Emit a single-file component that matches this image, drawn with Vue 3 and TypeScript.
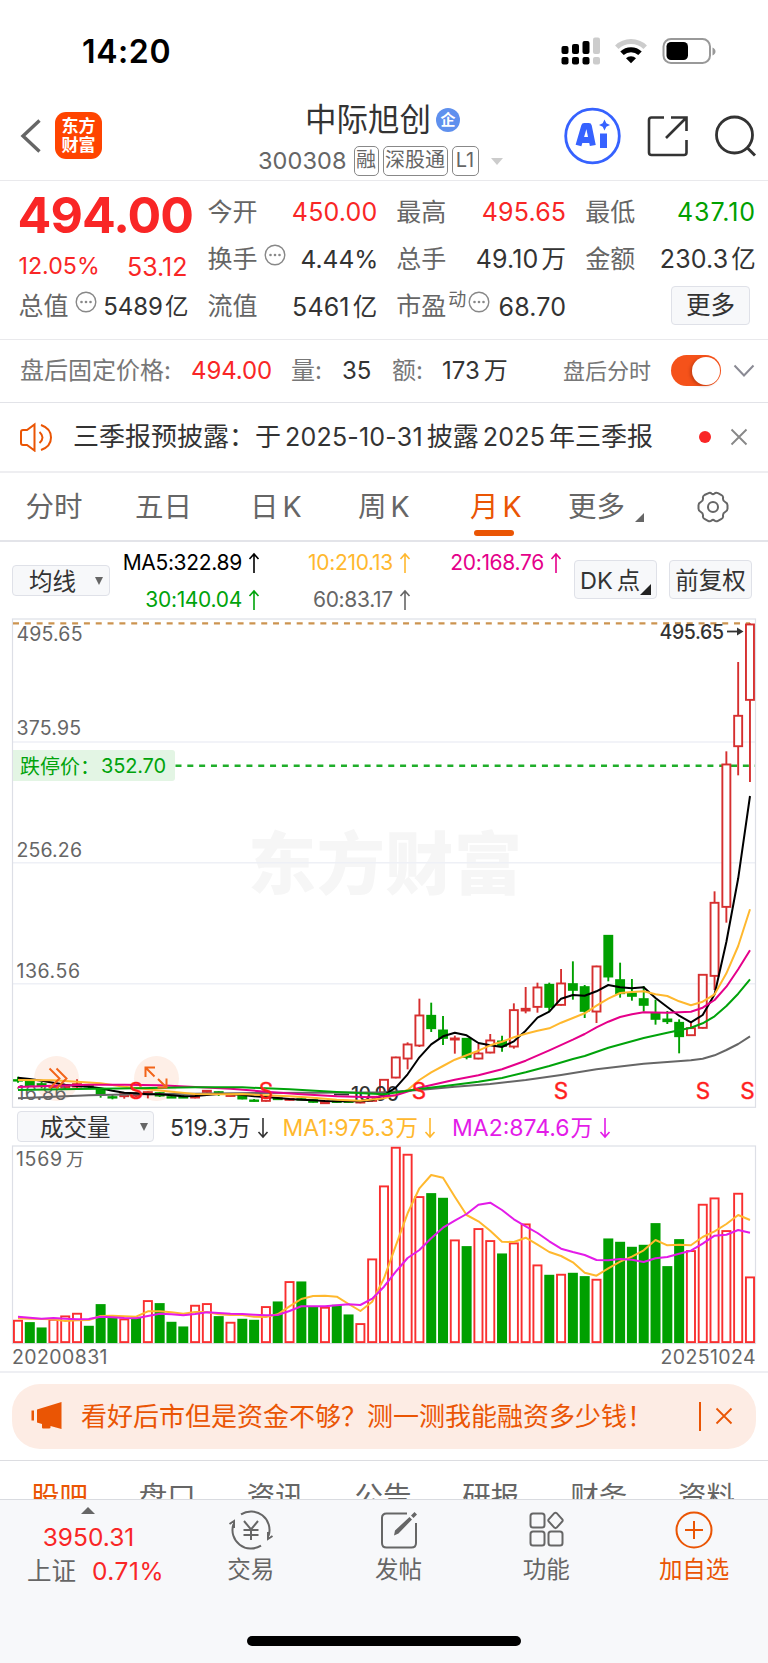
<script setup lang="ts">
type Candle = [up: 0 | 1, high: number, top: number, bottom: number, low: number]

const LEFT = 18
const STEP = 11.806
const cx = (i: number): number => LEFT + STEP * i

/* Candle and average values are stored in thirds of a pixel below the chart origin. */
const ORIGIN = 860
const py = (v: number): number => ORIGIN + v / 3

const candles: Candle[] = [
  [0, 650, 658, 662, 668], [0, 662, 662, 678, 678], [0, 666, 670, 678, 685], [1, 674, 677, 682, 684],
  [1, 672, 675, 685, 687], [1, 658, 670, 682, 690], [0, 672, 675, 680, 684], [0, 684, 684, 706, 713],
  [0, 704, 709, 713, 718], [1, 700, 700, 711, 716], [1, 698, 698, 710, 712], [1, 694, 694, 704, 715],
  [0, 697, 697, 709, 711], [0, 704, 709, 713, 713], [0, 706, 709, 713, 713], [1, 707, 707, 715, 715],
  [1, 690, 690, 698, 698], [0, 694, 694, 704, 708], [1, 704, 704, 710, 710], [0, 706, 706, 718, 718],
  [0, 717, 719, 723, 725], [1, 710, 710, 725, 725], [0, 713, 713, 720, 720], [1, 715, 715, 722, 722],
  [0, 715, 715, 720, 720], [0, 718, 718, 728, 728], [1, 722, 722, 732, 732], [0, 722, 722, 728, 728],
  [0, 722, 722, 728, 728], [1, 723, 723, 730, 730], [1, 708, 708, 725, 725], [1, 657, 657, 700, 700],
  [1, 590, 590, 655, 655], [1, 547, 551, 598, 628], [1, 416, 464, 559, 561], [0, 428, 465, 507, 516],
  [0, 468, 509, 536, 555], [1, 527, 533, 541, 581], [0, 534, 534, 593, 598], [1, 552, 578, 598, 598],
  [1, 522, 539, 580, 580], [0, 527, 542, 560, 575], [1, 430, 448, 562, 566], [1, 381, 444, 454, 460],
  [1, 368, 380, 443, 458], [0, 368, 372, 443, 455], [1, 327, 368, 437, 437], [0, 304, 370, 392, 419],
  [0, 375, 379, 455, 474], [1, 317, 317, 457, 489], [0, 225, 225, 352, 364], [0, 308, 358, 402, 413],
  [0, 357, 398, 410, 422], [0, 378, 415, 437, 455], [0, 419, 459, 479, 494], [0, 453, 476, 486, 492],
  [0, 478, 486, 531, 580], [1, 483, 502, 528, 528], [1, 342, 342, 506, 506], [1, 94, 126, 350, 390],
  [1, -326, -289, 143, 188], [1, -594, -435, -339, -254], [1, -710, -709, -478, -234],
]

const averages: { color: string; points: [number, number][] }[] = [
  { color: '#666666', points: [[0, 715], [6, 706], [10, 703], [15, 701], [20, 699], [25, 698], [31, 697], [34, 690], [37, 680], [40, 672], [43, 660], [46, 645], [49, 628], [53, 611], [57, 601], [58, 596], [59, 586], [60, 570], [61, 552], [62, 529]] },
  { color: '#000000', points: [[0, 653], [1, 657], [2, 662], [3, 668], [4, 674], [5, 678], [6, 680], [7, 685], [8, 692], [9, 698], [10, 700], [11, 703], [12, 703], [13, 706], [14, 709], [15, 708], [16, 705], [17, 702], [18, 702], [19, 705], [20, 709], [21, 711], [22, 714], [23, 717], [24, 719], [25, 721], [26, 723], [27, 724], [28, 724], [29, 724], [30, 721], [31, 705], [32, 683], [33, 643], [34, 592], [35, 553], [36, 529], [37, 518], [38, 526], [39, 549], [40, 556], [41, 561], [42, 544], [43, 512], [44, 473], [45, 455], [46, 416], [47, 405], [48, 407], [49, 394], [50, 375], [51, 382], [52, 385], [53, 382], [54, 414], [55, 441], [56, 467], [57, 487], [58, 465], [59, 403], [60, 245], [61, 55], [62, -192]] },
  { color: '#ffb82e', points: [[0, 660], [3, 661], [5, 665], [7, 670], [9, 680], [11, 688], [13, 695], [15, 702], [17, 703], [19, 702], [21, 706], [23, 709], [25, 713], [27, 719], [29, 722], [31, 715], [32, 705], [33, 690], [34, 660], [35, 637], [36, 618], [37, 599], [38, 586], [39, 572], [40, 556], [41, 545], [42, 532], [43, 521], [44, 512], [45, 505], [46, 488], [47, 474], [48, 460], [49, 437], [50, 416], [51, 399], [52, 396], [53, 394], [54, 403], [55, 408], [56, 424], [57, 436], [58, 425], [59, 403], [60, 340], [61, 258], [62, 148]] },
  { color: '#e5008a', points: [[0, 681], [3, 677], [6, 674], [9, 674], [12, 676], [15, 681], [18, 686], [21, 695], [24, 703], [27, 709], [30, 712], [32, 706], [34, 683], [37, 659], [39, 646], [41, 628], [43, 602], [45, 571], [47, 539], [48, 522], [49, 502], [50, 485], [51, 471], [52, 463], [53, 457], [55, 458], [57, 455], [58, 443], [59, 420], [60, 380], [61, 328], [62, 271]] },
  { color: '#00a30b', points: [[0, 690], [5, 687], [10, 685], [15, 682], [19, 682], [23, 688], [27, 696], [31, 703], [34, 687], [37, 674], [39, 665], [41, 654], [43, 637], [45, 618], [47, 597], [48, 588], [50, 563], [53, 534], [55, 518], [57, 503], [58, 490], [59, 469], [60, 438], [61, 401], [62, 358]] },
]
const line = (pts: [number, number][]): string => pts.map(([i, v]) => `${cx(i).toFixed(1)},${py(v).toFixed(1)}`).join(' ')

const upMonths = new Set([0, 3, 4, 5, 9, 11, 15, 16, 18, 21, 23, 26, 29, 30, 31, 32, 33, 34, 37, 39, 40, 42, 43, 44, 46, 49, 57, 58, 59, 60, 61, 62])
const volumes = [661, 668, 684, 658, 648, 640, 679, 614, 652, 657, 655, 602, 611, 667, 681, 616, 611, 650, 667, 658, 661, 620, 606, 545, 546, 621, 622, 616, 645, 671, 477, 258, 142, 163, 290, 281, 295, 420, 440, 386, 422, 462, 429, 372, 495, 526, 523, 520, 530, 538, 417, 427, 442, 436, 371, 500, 419, 452, 313, 294, 392, 280, 531]
const volMa1 = [655, 656, 657, 658, 663, 661, 660, 648, 647, 649, 650, 634, 634, 637, 641, 636, 636, 643, 645, 645, 650, 651, 643, 619, 597, 588, 587, 590, 612, 633, 605, 535, 437, 340, 265, 225, 233, 290, 345, 364, 392, 425, 426, 413, 434, 456, 468, 487, 518, 527, 505, 485, 470, 451, 420, 436, 434, 436, 411, 394, 372, 345, 360]
const volMa2 = [650, 653, 656, 654, 656, 658, 657, 650, 652, 654, 655, 648, 641, 643, 646, 642, 637, 639, 641, 642, 644, 646, 645, 633, 619, 619, 619, 616, 613, 615, 596, 560, 515, 474, 450, 415, 383, 362, 342, 314, 308, 330, 358, 379, 399, 424, 446, 456, 465, 480, 481, 477, 479, 486, 475, 471, 461, 452, 431, 407, 404, 390, 398]
const vy = (v: number): number => 1100 + v / 3
const volLine = (vals: number[]): string => vals.map((v, i) => `${cx(i).toFixed(1)},${vy(v).toFixed(1)}`).join(' ')

const axis = [
  { label: '495.65', y: 641, w: 66 },
  { label: '375.95', y: 735, w: 64.5 },
  { label: '256.26', y: 857, w: 65.5 },
  { label: '136.56', y: 978, w: 63.5 },
  { label: '16.86', y: 1100, w: 50 },
]
const signals = [136, 266, 419, 561, 703, 747.5]

const mas = [
  { text: 'MA5:322.89', cls: 'c5' }, { text: '10:210.13', cls: 'c10' }, { text: '20:168.76', cls: 'c20' },
  { text: '30:140.04', cls: 'c30' }, { text: '60:83.17', cls: 'c60' },
]
const volStats = [
  { text: '519.3', cls: 'v0' }, { text: 'MA1:975.3', cls: 'v1' }, { text: 'MA2:874.6', cls: 'v2' },
]

const periods = [
  { name: '分时', cls: 'p0' }, { name: '五日', cls: 'p1' }, { name: '日', k: true, cls: 'p2' },
  { name: '周', k: true, cls: 'p3' }, { name: '月', k: true, cls: 'p4', on: true }, { name: '更多', cls: 'p5', more: true },
]
const sections = ['股吧', '盘口', '资讯', '公告', '研报', '财务', '资料']
</script>

<template>
  <div class="app">
    <div class="status">
      <span class="clock">14:20</span>
      <svg class="status-icons" width="160" height="30" viewBox="560 36 160 30">
        <g fill="#000">
          <rect x="561.5" y="46" width="7" height="8" rx="2" /><rect x="572" y="44" width="7" height="10" rx="2" />
          <rect x="582.5" y="41" width="7" height="13" rx="2" /><rect x="561.5" y="57" width="7" height="7.5" rx="2" />
          <rect x="572" y="57" width="7" height="7.5" rx="2" /><rect x="582.5" y="57" width="7" height="7.5" rx="2" />
        </g>
        <rect x="593" y="37.5" width="7" height="16.5" rx="2" fill="#ccc" /><rect x="593" y="57" width="7" height="7.5" rx="2" fill="#ccc" />
        <g fill="none" stroke-width="5">
          <path d="M616.8 47.3a20.3 20.3 0 0 1 28.4 0" stroke="#ccc" />
          <path d="M622 53.3a13 13 0 0 1 18 0" stroke="#000" />
        </g>
        <path d="M626 58.3a7 7 0 0 1 10 0l-5 5z" fill="#000" />
        <rect x="663.5" y="39" width="46.5" height="24" rx="7.5" fill="none" stroke="#999" stroke-width="2" />
        <rect x="666.5" y="42" width="21.5" height="18" rx="4.5" fill="#000" />
        <path d="M712.5 47.5c4 1.500 4 6.500 0 8z" fill="#999" />
      </svg>
    </div>

    <header class="header">
      <svg class="back" width="24" height="36" viewBox="0 0 24 36"><path d="M20.500 2.500L4 18l16.500 15.500" fill="none" stroke="#666" stroke-width="3.400" /></svg>
      <div class="logo"><span>东方</span><span>财富</span></div>
      <div class="title-box">
        <div class="title">中际旭创<i>企</i></div>
        <div class="code"><b>300308</b><em>融</em><em>深股通</em><em>L1</em><u></u></div>
      </div>
      <svg class="head-icons" width="196" height="60" viewBox="562 106 196 60" fill="none">
        <circle cx="592.500" cy="136" r="26.800" stroke="#3662ff" stroke-width="2.800" />
        <path d="M578.500 145.500l5.700-19.500h4.600l4 19.500M580.500 140h11" stroke="#3662ff" stroke-width="6" stroke-linejoin="round" />
        <path d="M603.500 133.500v14.500" stroke="#3662ff" stroke-width="7" />
        <path d="M604.500 119.500l1.800 3.700 3.700 1.800-3.700 1.800-1.800 3.700-1.800-3.700-3.700-1.800 3.700-1.800z" fill="#3662ff" />
        <path d="M664 117.500h-12.500q-2.500 0-2.500 2.500v32.500q0 2.500 2.500 2.500h32.500q2.500 0 2.500-2.500V140M671 117.500h15.500V131M686 118l-20 20" stroke="#333" stroke-width="2.600" />
        <circle cx="734.500" cy="135" r="18" stroke="#333" stroke-width="2.800" /><path d="M747 147.500l8 8" stroke="#333" stroke-width="3" />
      </svg>
    </header>

    <section class="quote">
      <div class="qcol main">
        <div class="price">494.00</div>
        <div class="chg"><span>12.05%</span><span class="diff">53.12</span></div>
        <div class="q"><label>总值</label><svg class="dots" viewBox="0 0 22 22"><use href="#dots" /></svg><b>5489<s>亿</s></b></div>
      </div>
      <div class="qcol">
        <div class="q"><label>今开</label><b class="red">450.00</b></div>
        <div class="q"><label>换手</label><svg class="dots" viewBox="0 0 22 22"><g id="dots"><circle cx="11" cy="11" r="9.800" fill="none" stroke="#888" stroke-width="1.400" /><circle cx="6.500" cy="11" r="1.300" fill="#888" /><circle cx="11" cy="11" r="1.300" fill="#888" /><circle cx="15.500" cy="11" r="1.300" fill="#888" /></g></svg><b class="pct">4.44%</b></div>
        <div class="q"><label>流值</label><b>5461<s>亿</s></b></div>
      </div>
      <div class="qcol">
        <div class="q"><label>最高</label><b class="red">495.65</b></div>
        <div class="q"><label>总手</label><b>49.10<s>万</s></b></div>
        <div class="q pe"><label>市盈</label><sup>动</sup><svg class="dots" viewBox="0 0 22 22"><use href="#dots" /></svg><b>68.70</b></div>
      </div>
      <div class="qcol">
        <div class="q"><label>最低</label><b class="green">437.10</b></div>
        <div class="q"><label>金额</label><b>230.3<s>亿</s></b></div>
        <div class="q"><button class="more">更多</button></div>
      </div>
    </section>

    <section class="after">
      <span class="g a0">盘后固定价格:</span><span class="red a1">494.00</span>
      <span class="g a2">量:</span><span class="a3">35</span>
      <span class="g a4">额:</span><span class="a5">173<s>万</s></span>
      <span class="g a6">盘后分时</span>
      <span class="switch"><i></i></span>
      <svg class="down" width="22" height="14" viewBox="0 0 22 14"><path d="M1.500 1.500L11 11.500l9.500-10" fill="none" stroke="#8a8a94" stroke-width="2" /></svg>
    </section>

    <section class="notice">
      <svg class="horn" width="34" height="30" viewBox="19 421 34 30" fill="none" stroke="#ea5504" stroke-width="2"><path d="M34.500 423.500v26l-7.500-5.500h-4q-2 0-2-2v-11q0-2 2-2h4zM39.500 431q6 5.500 0 11M41 424q10 3.500 10 12.500t-10 12.500" /></svg>
      <span class="ntext">三季报预披露：于<b>2025-10-31</b>披露<b>2025</b>年三季报</span>
      <i class="dot"></i>
      <svg class="x" width="18" height="18" viewBox="0 0 18 18"><path d="M1.500 1.500l15 15M16.500 1.500l-15 15" stroke="#888" stroke-width="1.900" /></svg>
    </section>

    <nav class="periods">
      <span v-for="p in periods" :key="p.name" :class="[p.cls, { on: p.on }]">{{ p.name }}<b v-if="p.k">K</b><i v-if="p.more"></i></span>
      <svg class="gear" width="34" height="34" viewBox="-17 -17 34 34" fill="none" stroke="#666" stroke-width="2"><path d="M-5-13.500Q-3-15-1.500-13.500q1.500 1.300 3 0Q3-15 5-13.800l3.500 1.800q2 1.200 1.500 3.200-.3 2.800 2.300 4 2.200 1 2.200 3v3.600q0 2-2.200 3-2.600 1.200-2.300 4 .5 2-1.500 3.200L5 13.800Q3 15 1.500 13.500q-1.500-1.300-3 0Q-3 15-5 13.800l-3.500-1.800q-2-1.200-1.500-3.200.3-2.800-2.300-4-2.200-1-2.200-3v-3.600q0-2 2.200-3 2.600-1.200 2.300-4-.5-2 1.500-3.200z" /><circle r="5" /></svg>
    </nav>

    <section class="legend">
      <button class="select">均线<i></i></button>
      <div class="mas">
        <span v-for="m in mas" :key="m.text" :class="m.cls">{{ m.text }}<svg class="arrow" viewBox="0 0 12 22"><path d="M6 21V2M1.500 7L6 2l4.500 5" /></svg></span>
      </div>
      <button class="tool dk">DK<s>点</s><i></i></button><button class="tool">前复权</button>
    </section>

    <svg class="kline" width="768" height="490" viewBox="0 618 768 490">
      <g class="mark"><text x="248" y="889" textLength="274">东方财富</text></g>
      <g stroke="#eef0f6" stroke-width="1.600"><path d="M13 742H755M13 862.700H755M13 983.700H755" /></g>
      <rect x="12.500" y="619" width="743" height="488.300" fill="none" stroke="#dddfe6" stroke-width="1.200" />
      <circle cx="56.500" cy="1078.500" r="22.500" fill="#feefe7" /><circle cx="156.500" cy="1078.500" r="22.500" fill="#feefe7" />
      <path d="M13 623.300H750" stroke="#cc9450" stroke-width="2.200" stroke-dasharray="6 5.820" />
      <path d="M175.500 765.700H755" stroke="#1fae2a" stroke-width="2.600" stroke-dasharray="6 5.820" />
      <path d="M13 750h159q3 0 3 3v25q0 3-3 3H13z" fill="#e3f5e4" />
      <text class="limit" x="20" y="773.500">跌停价：</text><text class="limit" x="101" y="773" textLength="65">352.70</text>
      <g v-for="(c, i) in candles" :key="i" :fill="c[0] ? '#fff' : '#00a000'" :stroke="c[0] ? '#d62f2f' : '#00a000'" stroke-width="1.900">
        <path :d="`M${cx(i)} ${py(c[1])}V${py(c[4])}`" />
        <rect :x="cx(i) - 4" :y="py(c[2]) + 0.800" width="8" :height="Math.max((c[3] - c[2]) / 3 - 1.600, 0.500)" />
      </g>
      <g class="axis"><text v-for="a in axis" :key="a.label" x="16.500" :y="a.y" :textLength="a.w">{{ a.label }}</text></g>
      <g class="tag"><text x="659.500" y="638.500" textLength="64.500">495.65</text><text x="351" y="1101" textLength="48">10.90</text></g>
      <path d="M334 1094.500h15" stroke="#333" stroke-width="1.800" />
      <g fill="none" stroke-width="2" stroke-linejoin="round"><polyline v-for="m in averages" :key="m.color" :points="line(m.points)" :stroke="m.color" /></g>
      <path d="M727 631.500h11" stroke="#333" stroke-width="1.800" /><path d="M737 627.500l6.500 4-6.500 4z" fill="#333" />
      <g class="sig"><text v-for="s in signals" :key="s" :x="s" y="1098.500">S</text></g>
      <path d="M49.500 1068.500l10 10-10 10M56.500 1068.500l10 10-10 10" fill="none" stroke="#f26419" stroke-width="2" />
      <path d="M155 1067.500h-9.500v9.500M146 1068l8.500 8.500M157.500 1087.500h9v-9M166 1087l-8-8" fill="none" stroke="#f26419" stroke-width="2" />
    </svg>

    <section class="vlegend">
      <button class="select vol">成交量<i></i></button>
      <span v-for="v in volStats" :key="v.text" :class="v.cls">{{ v.text }}<s>万</s><svg class="arrow" viewBox="0 0 12 22"><path d="M6 1v19M1.500 15L6 20l4.500-5" /></svg></span>
    </section>

    <svg class="volume" width="768" height="226" viewBox="0 1145 768 226">
      <rect x="12.500" y="1146" width="743" height="197.500" fill="none" stroke="#dddfe6" stroke-width="1.200" />
      <g v-for="(v, i) in volumes" :key="i" :fill="upMonths.has(i) ? '#fff' : '#00a000'" :stroke="upMonths.has(i) ? '#f92f2f' : '#00a000'" stroke-width="1.900">
        <rect :x="cx(i) - 4.050" :y="vy(v) + 0.400" width="8.100" :height="1341.700 - vy(v)" />
      </g>
      <g fill="none" stroke-width="2" stroke-linejoin="round"><polyline :points="volLine(volMa1)" stroke="#ffb82e" /><polyline :points="volLine(volMa2)" stroke="#e31be8" /></g>
      <g class="axis"><text x="16" y="1166" textLength="46">1569</text><text class="cj" x="66" y="1166">万</text>
        <text x="12" y="1363.500" textLength="95.500">20200831</text><text x="660.500" y="1363.500" textLength="95">20251024</text></g>
    </svg>

    <section class="ad">
      <div class="pill">
        <svg width="32" height="28" viewBox="30 1403 32 28" fill="#ea5504"><rect x="31.500" y="1411.500" width="2.500" height="10" /><path d="M37 1410.500l24.500-7.500v27l-11-3v1.500q0 1-1.500 1h-6q-1 0-1-1v-3.500l-5-1.500z" /></svg>
        <span class="adtext">看好后市但是资金不够？测一测我能融资多少钱！</span>
        <i class="sep"></i>
        <svg width="18" height="18" viewBox="0 0 18 18"><path d="M1.500 1.500l15 15M16.500 1.500l-15 15" stroke="#ea5504" stroke-width="1.800" /></svg>
      </div>
    </section>

    <nav class="sections"><span v-for="(s, i) in sections" :key="s" :class="{ on: i === 0 }">{{ s }}</span></nav>

    <footer class="bottom">
      <div class="index"><i></i><b>3950.31</b><div><span>上证</span><b>0.71%</b></div></div>
      <div class="tab">
        <svg width="46" height="40" viewBox="-23 -20 46 40" fill="none" stroke="#666" stroke-width="2"><path d="M-10-15.600A18.500 18.500 0 0 1 17.600 5.700M10 15.600A18.500 18.500 0 0 1-17.600-5.700M-21.500-6l4.500-3v7M21.500 6l-4.500 3V2M-7-9L0-.500 7-9M0-.500V10M-7.500 0h15M-7.500 5h15" /></svg>
        <span>交易</span>
      </div>
      <div class="tab">
        <svg width="46" height="40" viewBox="-23 -20 46 40" fill="none" stroke="#666" stroke-width="2"><path d="M8-16.500h-20.500q-4.500 0-4.500 4.500v25q0 4.500 4.500 4.500h25q4.500 0 4.500-4.500V-7" /><path d="M-5 5.500l1-5L10.500-13l2.500 2.500L-.500 3.500zM12-14.500l3.500-3.500 2.500 2.500-3.500 3.500z" fill="#666" stroke="none" /></svg>
        <span>发帖</span>
      </div>
      <div class="tab">
        <svg width="46" height="40" viewBox="-23 -20 46 40" fill="none" stroke="#666" stroke-width="2"><rect x="-15.500" y="-16.500" width="14" height="14" rx="2.500" /><rect x="-15.500" y="1.500" width="14" height="14" rx="2.500" /><rect x="2.500" y="1.500" width="14" height="14" rx="2.500" /><path d="M8.300-16.800q1.200-1 2.400 0l5.600 6.200q.8 1 0 2L10.700-2.400q-1.200 1-2.400 0L2.700-8.600q-.8-1 0-2z" /></svg>
        <span>功能</span>
      </div>
      <div class="tab hot">
        <svg width="46" height="40" viewBox="-23 -20 46 40" fill="none" stroke="#ea5504" stroke-width="2"><circle r="17.500" /><path d="M-9 0H9M0-9V9" /></svg>
        <span>加自选</span>
      </div>
      <div class="home"></div>
    </footer>
  </div>
</template>

<style>
body { background: #fff; }
</style>

<style scoped>
* { box-sizing: border-box; }
.app { width: 768px; height: 1663px; overflow: hidden; background: #fff; color: #333; font-family: Inter, "Noto Sans CJK SC", sans-serif; font-size: 24px; line-height: 1; display: flex; flex-direction: column; white-space: nowrap; }
.app > * { flex: none; }
svg { display: block; flex: none; }
b, em, i { font-weight: 400; font-style: normal; }
s, u { text-decoration: none; }
button { font: inherit; color: inherit; padding: 0; background: #f7f8fa; border: 1.500px solid #dfe1e8; border-radius: 4px; display: flex; align-items: center; }
.red { color: #f92626 !important; }
.green { color: #00a000 !important; }

.status { height: 100px; display: flex; padding: 36px 48px 0 82px; justify-content: space-between; }
.clock { font-size: 32px; line-height: 32px; font-weight: 600; letter-spacing: .6px; color: #000; }
.header { height: 81px; display: flex; border-bottom: 1.500px solid #e9e9ec; padding-left: 19px; }
.back { margin-top: 18px; }
.logo { width: 47px; height: 47px; margin: 12px 0 0 12px; border-radius: 11px; background: #ff4400; color: #fff; font-weight: 700; font-size: 17px; line-height: 19px; display: flex; flex-direction: column; align-items: center; justify-content: center; }
.title-box { margin-left: 156px; width: 251px; display: flex; flex-direction: column; }
.title { height: 38px; margin: 1px 0 0 47px; font-size: 31.500px; line-height: 38px; display: flex; align-items: center; }
.title i { width: 24px; height: 24px; margin-left: 5px; border-radius: 50%; background: #5f90ee; color: #fff; font-size: 15px; font-weight: 700; line-height: 24px; text-align: center; }
.code { display: flex; align-items: center; height: 30px; margin-top: 7px; color: #666; }
.code b { font-size: 23.500px; letter-spacing: .1px; width: 95.500px; }
.code em { height: 30px; border: 1.500px solid #888; border-radius: 5px; padding: 0 1.500px; margin-right: 4px; font-size: 20px; line-height: 27px; }
.code em:nth-child(4) { width: 27px; padding: 0; text-align: center; }
.code u { margin-left: 8px; border: 6.500px solid transparent; border-top: 7px solid #ccc; border-bottom: 0; }
.head-icons { margin: 6px 0 0 53px; }

.quote { height: 159px; display: flex; padding: 8px 12px 0 18.500px; border-bottom: 1.500px solid #e9e9ec; }
.qcol { width: 170px; margin-left: 19px; }
.qcol.main { width: 170px; margin-left: 0; }
.price { height: 52px; margin-left: -1px; font-size: 50px; line-height: 52px; font-weight: 700; letter-spacing: -.9px; color: #f92626; }
.chg { height: 42px; display: flex; justify-content: space-between; align-items: center; color: #f92626; font-size: 23.200px; padding: 10px 1px 0 0; }
.diff { font-size: 25px; }
.q { height: 47px; display: flex; align-items: center; position: relative; }
.qcol .q:nth-child(3) b { padding-top: 1px; }
.q label { font-size: 25px; color: #666; }
.q b { margin-left: auto; font-size: 25px; letter-spacing: .15px; display: flex; align-items: center; }
.q s { font-size: 24.500px; margin-left: 3px; }
.q .green { letter-spacing: .9px; }
.q .pct { font-size: 24.500px; letter-spacing: 0; margin-right: -1px; }
.main .q b { font-size: 24px; letter-spacing: 0; }
.main .q s { font-size: 23.500px; margin-left: 2px; }
.qcol:nth-child(4) { width: 171px; }
.dots { width: 22px; height: 22px; margin: -10px 0 0 6.500px; }
.pe sup { font-size: 18px; color: #666; align-self: flex-start; margin: 8px 0 0 2px; }
.pe .dots { margin-left: 2px; }
.more { width: 79px; height: 39px; margin: -2px 6px 0 auto; justify-content: center; font-size: 24.500px; }

.after { height: 63px; display: flex; align-items: center; border-bottom: 1.500px solid #e2e3e8; padding-left: 20px; }
.after .g { color: #777; font-size: 24px; }
.after span { flex: none; display: flex; align-items: center; }
.after s { margin-left: 4px; }
.a0 { width: 171px; } .a1 { width: 100px; letter-spacing: -.1px; } .a2 { width: 51px; } .a3 { width: 50px; } .a4 { width: 50px; } .a5 { width: 121px; }
.after .a6 { width: 108px; font-size: 22px; }
.switch { width: 50px; height: 31px; margin-top: -1px; border-radius: 16px; background: #f5521a; justify-content: flex-end; padding-right: 1px; }
.switch i { width: 28px; height: 28px; border-radius: 50%; background: #fff; box-shadow: -2px 1px 3px rgba(120, 30, 0, .35); }
.down { margin-left: 12px; }

.notice { height: 69.500px; display: flex; align-items: center; border-bottom: 2px solid #eeeef1; padding-left: 19px; }
.ntext { margin-left: 20px; width: 606px; font-size: 26px; }
.ntext b { margin: 0 4px; font-size: 25px; letter-spacing: .2px; }
.dot { width: 12px; height: 12px; border-radius: 50%; background: #f92626; margin-left: 20px; }
.x { margin-left: 19px; }

.periods { height: 69.500px; display: flex; align-items: center; border-bottom: 2px solid #e3e4e9; padding: 1px 0 0 25.500px; font-size: 28.500px; color: #666; }
.periods span { flex: none; position: relative; display: flex; }
.periods b { margin-left: 4px; }
.p0 { width: 109.500px; } .p1 { width: 115px; } .p2 { width: 108px; } .p3 { width: 112px; } .p4 { width: 98px; } .p5 { width: 128px; }
.on { color: #ea5504; }
.periods .on::after { content: ""; position: absolute; left: 3.500px; top: 37px; width: 40px; height: 6px; border-radius: 3px; background: #ea5504; }
.p5 i { align-self: flex-end; margin: 0 0 -1px 10px; border-left: 9px solid transparent; border-bottom: 9px solid #666; }

.legend { height: 76px; display: flex; padding: 0 16px 0 12px; align-items: flex-start; }
.select { width: 98px; height: 31px; margin-top: 23px; padding: 2px 0 0 16px; font-size: 23.500px; line-height: 28px; }
.select i { margin: -2px 0 0 19px; border: 4.500px solid transparent; border-top: 8px solid #666; border-bottom: 0; }
.mas { width: 452px; margin-left: 1px; padding-top: 2px; display: grid; grid-template-columns: 149px 151px 151px; grid-auto-rows: 37px; font-size: 21px; letter-spacing: -.32px; color: #000; }
.mas span { display: flex; align-items: center; justify-content: flex-end; }
.arrow { width: 12px; height: 22px; margin-left: 6px; fill: none; stroke: currentColor; stroke-width: 1.600; }
.c10 { color: #ffb82e; } .c20 { color: #e5008a; } .c30 { color: #00a30b; } .c60 { color: #666; }
.tool { width: 83px; height: 39px; margin: 18px 0 0 12px; padding-top: 2px; justify-content: center; font-size: 23.500px; position: relative; }
.dk { padding-right: 11px; }
.dk s { margin-left: 4px; }
.dk i { position: absolute; right: 5px; bottom: 3px; border-left: 11px solid transparent; border-bottom: 11px solid #222; }

.mark { font-size: 68px; font-weight: 900; fill: #f6f6f6; }
.axis { font-size: 19.500px; fill: #666; }
.limit { font-size: 20px; fill: #00a30b; }
.tag { font-size: 19.500px; font-weight: 500; fill: #333; }
.sig { font-size: 22.500px; fill: #ff1e1e; text-anchor: middle; stroke: #ff1e1e; stroke-width: .4px; }
.cj { font-size: 18px; }

.vlegend { height: 37px; display: flex; align-items: center; padding: 3px 0 0 17px; font-size: 23px; }
.vol { width: 137px; height: 31px; margin: -3px 16px 0 0; padding-left: 22px; font-size: 23.500px; }
.vol i { margin-left: 29px; }
.vlegend span { display: flex; align-items: center; }
.vlegend s { margin-left: 1px; font-size: 22.500px; }
.vlegend .arrow { margin-left: 6px; }
.v0 { width: 112.500px; } .v1 { width: 169.500px; color: #ffb82e; } .v2 { color: #e31be8; }

.ad { height: 90px; border-top: 2px solid #eeeff3; border-bottom: 1.500px solid #dcdde1; padding: 10.500px 12px 0; }
.pill { height: 65px; border-radius: 28px; background: #fdece4; display: flex; align-items: center; padding-left: 18px; color: #ea5504; }
.adtext { width: 618px; margin-left: 19px; padding-top: 2px; font-size: 26px; }
.sep { width: 1.500px; height: 29px; background: #ea5504; margin-right: 14px; }
.sections { height: 37.500px; overflow: hidden; display: flex; justify-content: space-between; padding: 19px 33px 0 31px; font-size: 28.500px; line-height: 34px; color: #666; }
.sections .on { color: #ea5504; }
.bottom { height: 164.500px; background: #f7f8fa; border-top: 1.500px solid #d9dbe0; display: flex; position: relative; color: #666; }
.index { width: 177px; display: flex; flex-direction: column; align-items: center; padding-top: 7px; }
.index i { border: 7px solid transparent; border-bottom: 7px solid #666; border-top: 0; }
.index b { color: #f92626; font-size: 24.500px; }
.index > b { margin-top: 10px; line-height: 26px; }
.index div { display: flex; align-items: center; margin: 4px 0 0 14px; line-height: 34px; font-size: 24.500px; }
.index div b { margin-left: 16px; letter-spacing: .5px; }
.tab { width: 147.800px; display: flex; flex-direction: column; align-items: center; padding-top: 10px; font-size: 23.500px; }
.tab span { margin-top: 5px; line-height: 30px; }
.hot { color: #ea5504; }
.home { position: absolute; left: 247px; bottom: 17px; width: 274px; height: 10px; border-radius: 5px; background: #000; }
</style>
